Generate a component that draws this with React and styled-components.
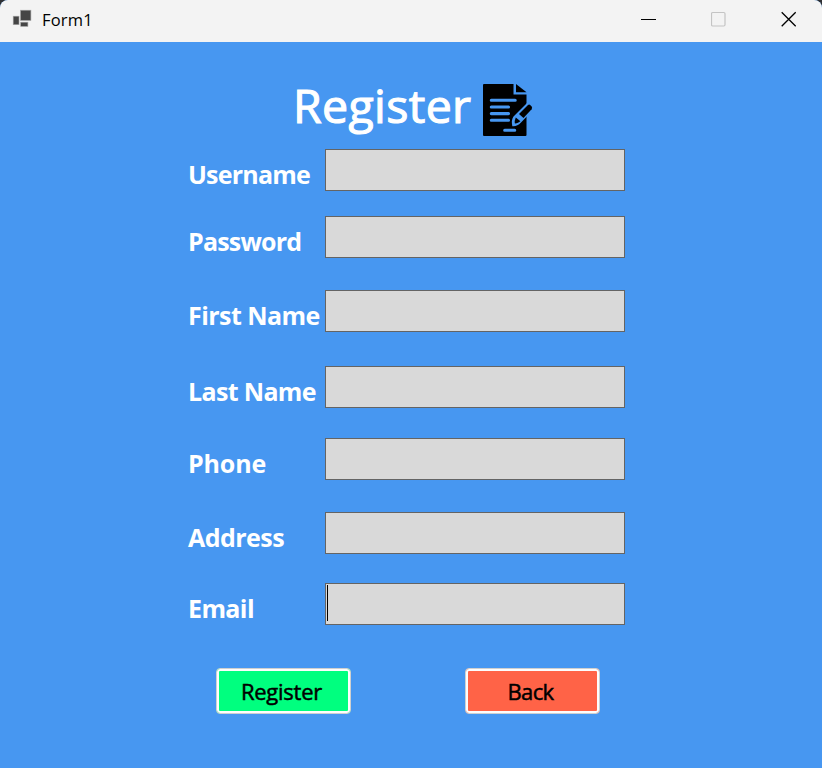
import React from "react";
import styled, { createGlobalStyle } from "styled-components";

const GlobalStyle = createGlobalStyle`
  * { box-sizing: border-box; }
  body {
    margin: 0;
    overflow: hidden;
    background: #2f3033;
    font-family: "Open Sans", "Noto Sans", sans-serif;
  }
`;

const Window = styled.div`
  width: 822px;
  height: 768px;
  display: flex;
  flex-direction: column;
  background: #4797f1;
  border-radius: 8px 8px 0 0;
  overflow: hidden;
`;

const TitleBar = styled.header`
  height: 42px;
  flex: none;
  display: flex;
  align-items: flex-start;
  background: #f3f3f3;
`;

const AppIcon = styled.svg`
  width: 20px;
  height: 20px;
  margin: 9px 0 0 12px;
`;

const Caption = styled.span`
  flex: 1;
  margin: 9px 0 0 10px;
  font-size: 16.5px;
  line-height: 22px;
  letter-spacing: 0.2px;
  color: #000;
`;

const Controls = styled.div`
  display: flex;
  margin-right: -2px;
`;

const ControlButton = styled.button`
  width: 70px;
  height: 38px;
  padding: 0;
  border: 0;
  background: transparent;
  display: flex;
  align-items: center;
  justify-content: center;
`;

const Heading = styled.div`
  height: 52px;
  margin: 42px 0 0 293px;
  display: flex;
`;

const Title = styled.h1`
  width: 190px;
  margin: 0;
  font-size: 46.5px;
  font-weight: 400;
  line-height: 42px;
  letter-spacing: 0.35px;
  -webkit-text-stroke: 1.1px #fff;
  white-space: nowrap;
  color: #fff;
`;

const Form = styled.form`
  display: flex;
  flex-direction: column;
  padding-left: 188px;
`;

const Field = styled.div`
  height: 42px;
  margin-top: ${(p) => p.$gap}px;
  display: flex;
`;

const Label = styled.label`
  width: 137px;
  flex: none;
  padding-top: 9px;
  font-size: 25px;
  font-weight: 700;
  line-height: 32px;
  letter-spacing: ${(p) => p.$spacing}px;
  white-space: nowrap;
  color: #fff;
`;

const Input = styled.div`
  width: 300px;
  height: 42px;
  padding: 1px;
  border: 1px solid #646464;
  background: #d9d9d9;
`;

const Caret = styled.span`
  display: block;
  width: 1px;
  height: 36px;
  background: #000;
`;

const Actions = styled.div`
  margin: 43px 0 0 28px;
  display: flex;
  gap: 114px;
`;

const ActionButton = styled.button`
  width: 135px;
  height: 46px;
  padding: 0 4px 0 0;
  border: 1px solid #d0d0d0;
  border-radius: 4px;
  background: ${(p) => p.$color};
  box-shadow: inset 0 0 0 2px #fdfdfd;
  font-family: inherit;
  font-size: 22px;
  font-weight: 400;
  letter-spacing: ${(p) => p.$spacing}px;
  -webkit-text-stroke: 0.5px #000;
  color: #000;
`;

const fields = [
  { label: "Username", gap: 13, spacing: -0.8 },
  { label: "Password", gap: 25, spacing: -0.8 },
  { label: "First Name", gap: 32, spacing: -0.55 },
  { label: "Last Name", gap: 34, spacing: -0.65 },
  { label: "Phone", gap: 30, spacing: -0.15 },
  { label: "Address", gap: 32, spacing: -0.55 },
  { label: "Email", gap: 29, spacing: -0.6, focused: true },
];

function DocumentIcon() {
  return (
    <svg width="50" height="52" viewBox="0 0 50 52">
      <path d="M0 1 Q0 0 1 0 H30.5 V10.5 H43.5 V51 Q43.5 52 42.5 52 H1 Q0 52 0 51Z" fill="#000" />
      <path d="M33 0 L43.5 8.2 H33Z" fill="#000" />
      <path d="M8.3 16.3H32.2M8.3 23H25.5M8.3 29.6H25.5M8.3 36.2H25.5M21.7 46.3H31.7" stroke="#4797f1" strokeWidth="3.1" strokeLinecap="round" />
      <path d="M30.5 32.5 L44 19 L50 26 L38 38.5 Q34 42.8 29.3 42.2 Q28 36 30.5 32.5Z" fill="#4797f1" />
      <path d="M36 30 L45 21 Q46.2 19.9 47.2 21 L48.6 22.6 Q49.6 24 48.6 25.2 L40.5 34Z" fill="#000" />
      <path d="M32.8 33.5 L37.4 37.3 Q34.5 39.8 31.8 39.3 Q31.3 36.8 32.8 33.5Z" fill="#000" />
    </svg>
  );
}

export default function App() {
  return (
    <>
      <GlobalStyle />
      <Window>
        <TitleBar>
          <AppIcon viewBox="0 0 20 20">
            <g fill="#454545" stroke="#a2a2a2" strokeWidth="0.6">
              <rect x="8.5" y="1.2" width="10.4" height="10.2" />
              <rect x="1.2" y="7.2" width="5.8" height="8.5" />
              <rect x="8.7" y="13.2" width="7.2" height="4.2" />
            </g>
          </AppIcon>
          <Caption>Form1</Caption>
          <Controls>
            <ControlButton aria-label="Minimize">
              <svg width="16" height="16"><path d="M0 8.5H15" stroke="#000" /></svg>
            </ControlButton>
            <ControlButton aria-label="Maximize">
              <svg width="16" height="16" fill="none"><rect x="0.5" y="1.5" width="13.5" height="13.5" rx="1.2" stroke="#c4c4c4" strokeWidth="1.2" /></svg>
            </ControlButton>
            <ControlButton aria-label="Close">
              <svg width="16" height="16"><path d="M0.7 1.3L14.7 15.3M14.7 1.3L0.7 15.3" stroke="#000" strokeWidth="1.3" /></svg>
            </ControlButton>
          </Controls>
        </TitleBar>
        <Heading>
          <Title>Register</Title>
          <DocumentIcon />
        </Heading>
        <Form>
          {fields.map((f) => (
            <Field key={f.label} $gap={f.gap}>
              <Label $spacing={f.spacing}>{f.label}</Label>
              <Input>{f.focused && <Caret />}</Input>
            </Field>
          ))}
          <Actions>
            <ActionButton type="button" $color="#00ff7f" $spacing={-0.25}>Register</ActionButton>
            <ActionButton type="button" $color="#ff6347" $spacing={-0.6}>Back</ActionButton>
          </Actions>
        </Form>
      </Window>
    </>
  );
}
